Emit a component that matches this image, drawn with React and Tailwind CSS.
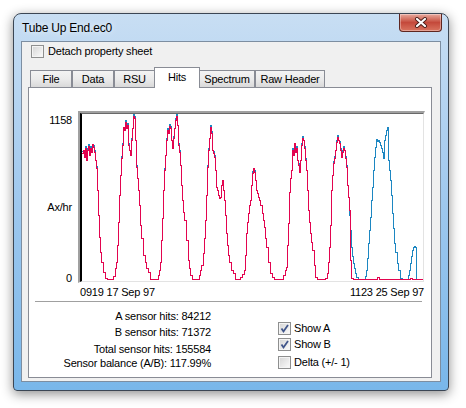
import React from 'react';

// red trace (B sensor) in page pixels
const red = [
  [81,153],[83,150],[84,157],[85,148],[86,160],[87,150],[88,146],[89,155],[90,148],[91,152],[92,144],[93,147],[94,152],[95,160],[96,168],[97,190],[98,215],[99,237],[100,252],[101,262],[103,272],[105,278],[107,281],[109,280],[111,279],[113,276],[115,268],[116,262],[117,245],[118,222],[119,195],[120,175],[121,158],[122,145],[123,127],[124,130],[125,122],[126,128],[127,125],[128,145],[129,150],[130,155],[131,140],[132,128],[133,116],[134,118],[135,140],[136,167],[137,178],[138,190],[139,205],[140,225],[141,238],[143,255],[145,262],[146,268],[148,272],[150,281],[153,281],[156,279],[158,275],[159,270],[160,262],[161,240],[162,218],[163,190],[164,170],[165,155],[166,140],[167,130],[168,133],[169,126],[170,128],[171,140],[172,148],[173,138],[174,128],[175,120],[176,116],[177,125],[178,145],[179,152],[180,165],[181,185],[182,200],[183,212],[184,220],[186,240],[188,260],[189,268],[190,275],[192,280],[195,281],[197,279],[199,275],[200,270],[201,265],[203,253],[204,238],[205,220],[206,195],[207,167],[208,150],[209,138],[210,127],[211,133],[212,150],[213,153],[214,157],[215,170],[216,187],[217,190],[218,195],[219,198],[220,197],[221,185],[222,180],[223,190],[224,200],[225,215],[226,233],[227,245],[228,255],[229,262],[231,270],[233,273],[235,279],[237,281],[240,277],[242,274],[244,270],[245,255],[246,233],[247,222],[248,213],[249,205],[250,200],[251,185],[252,173],[253,168],[254,172],[255,180],[256,190],[257,193],[258,197],[259,200],[260,205],[262,213],[263,220],[264,227],[265,238],[266,247],[268,262],[270,273],[272,277],[274,280],[277,281],[279,281],[281,279],[283,275],[285,270],[286,267],[287,245],[288,223],[289,192],[290,178],[291,170],[292,150],[293,155],[294,143],[295,152],[296,148],[297,160],[298,165],[299,172],[300,160],[301,145],[302,138],[303,140],[304,148],[305,160],[306,170],[307,190],[308,210],[309,222],[310,233],[311,242],[312,250],[314,265],[315,277],[317,281],[320,281],[323,280],[325,278],[327,273],[328,262],[329,247],[330,225],[331,190],[332,175],[333,163],[334,158],[335,150],[336,142],[337,137],[338,140],[339,143],[340,150],[341,157],[342,152],[343,148],[344,150],[345,158],[346,167],[347,185],[348,197],[349,210],[350,260],[351,278],[353,281],[358,281],[362,281],[364,280],[366,279],[368,281],[372,281],[375,279],[377,277],[379,279],[381,281],[386,281],[390,280],[393,281],[398,281],[400,281],[405,281],[408,280],[410,278],[412,279],[414,281],[423,281],
];

// blue trace (A sensor): tracks red, then keeps going after B dies
const blue = [
  ...red.filter(([x]) => x < 349).map(([x, y], i) => [x, y < 175 && i % 3 !== 1 ? y - 2 : y]),
  [349,215],[350,230],[351,247],[352,256],[353,263],[354,268],[355,273],[356,277],[358,281],[361,281],[363,280],[365,276],[366,270],[367,258],[368,243],[369,230],[370,217],[371,200],[372,187],[373,170],[374,157],[375,147],[376,139],[377,141],[378,140],[379,142],[380,145],[381,148],[382,152],[383,158],[384,140],[385,135],[386,130],[387,127],[388,160],[389,170],[390,180],[391,195],[392,213],[393,228],[394,243],[395,252],[397,263],[398,270],[400,278],[402,281],[406,281],[408,275],[409,270],[410,263],[411,256],[412,250],[413,247],[414,246],[415,247],[416,281],[423,281],
];

// staircase path so the trace looks like the old GDI plot
const stepPath = (arr) =>
  arr
    .map(([x, y], i) => {
      const yy = Math.min(y, 279) + 0.5;
      return i === 0 ? `M${x + 0.5} ${yy}` : `H${x + 0.5} V${yy}`;
    })
    .join(' ');

const CheckBox = ({ checked }) => (
  <div className="w-[13px] h-[13px] border border-[#8e8f8f] bg-[#f4f4f4] p-px shrink-0">
    <div className="w-full h-full bg-gradient-to-br from-[#d8d8d8] to-[#f8f8f8] relative">
      {checked && (
        <svg width="11" height="11" viewBox="0 0 11 11" className="absolute -top-px -left-px">
          <path d="M2.5 5.5 L4.5 8.5 L9 2" fill="none" stroke="#40558a" strokeWidth="1.8" />
        </svg>
      )}
    </div>
  </div>
);

const Tab = ({ label, w, selected, className = '' }) =>
  selected ? (
    <div className={`${w} h-[21px] bg-white border border-b-0 border-[#898c95] relative z-10 flex justify-center pt-[3px] ${className}`}>
      {label}
    </div>
  ) : (
    <div className={`${w} h-[17px] mb-px bg-gradient-to-b from-[#f3f3f3] via-[#ebebeb] to-[#d9d9d9] border border-b-0 border-[#898c95] flex justify-center pt-[2px] ${className}`}>
      {label}
    </div>
  );

export default function App() {
  return (
    <div className="w-[466px] h-[408px] bg-white pt-[13px] pl-[13px] text-black font-['Liberation_Sans',Arial,sans-serif] text-[11px] leading-[13px] tracking-[-0.2px]">
      <div className="w-[436px] h-[378px] rounded-t-[8px] rounded-b-[4px] border border-[#3b4654] bg-gradient-to-b from-[#c8def3] via-[#9fc8ee] to-[#79b7ea] shadow-[0_3px_12px_rgba(0,0,0,0.45)] flex flex-col px-[7px] pb-[8px]">
        {/* title bar */}
        <div className="h-[27px] -mx-[7px] flex items-start justify-between">
          <div className="pl-[8px] pt-[7px] text-[12px] leading-[14px] [text-shadow:0_0_6px_#fff]">Tube Up End.ec0</div>
          <div className="w-[43px] h-[18px] mr-[6px] rounded-b-[4px] border border-t-0 border-[#5e2620] bg-gradient-to-b from-[#e7a99e] via-[#c4493b] to-[#d9735f] flex items-center justify-center shadow-[inset_0_0_0_1px_rgba(255,255,255,0.35)]">
            <svg width="14" height="11" viewBox="0 0 14 11">
              <path d="M3 2 L11 9 M11 2 L3 9" stroke="#4a1d18" strokeWidth="4" strokeLinecap="round" />
              <path d="M3 2 L11 9 M11 2 L3 9" stroke="#fff" strokeWidth="2.2" strokeLinecap="round" />
            </svg>
          </div>
        </div>

        {/* client area */}
        <div className="flex-1 border border-[#7d8ea1] bg-[#f0f0f0] flex flex-col">
          <div className="pt-[3px] pl-[9px] flex items-center gap-[4px]">
            <CheckBox />
            <span>Detach property sheet</span>
          </div>

          <div className="mt-[9px] ml-[8px] h-[21px] -mb-px flex items-end">
            <Tab label="File" w="w-[42px]" />
            <Tab label="Data" w="w-[42px]" />
            <Tab label="RSU" w="w-[41px]" />
            <Tab label="Hits" w="w-[46px]" selected className="-ml-px" />
            <Tab label="Spectrum" w="w-[56px]" className="-ml-px" />
            <Tab label="Raw Header" w="w-[70px]" />
          </div>

          <div className="ml-[6px] w-[404px] h-[291px] border border-[#898c95] bg-white flex flex-col">
            {/* chart */}
            <div className="pt-[23px] flex">
              <div className="w-[43px] h-[172px] flex flex-col items-end">
                <span className="mt-[3px]">1158</span>
                <span className="mt-[74px]">Ax/hr</span>
                <span className="mt-[58px]">0</span>
              </div>
              <div className="ml-[6px] w-[347px] h-[172px] border-t-2 border-l-2 border-[#a0a0a0] border-r border-b border-r-white border-b-white">
                <div className="w-full h-full border-t border-l-2 border-t-[#696969] border-l-black border-r border-b border-r-[#e3e3e3] border-b-[#e3e3e3] overflow-hidden">
                  <svg width="341" height="167" viewBox="82 114 341 167" className="block" shapeRendering="crispEdges">
                    <path d={stepPath(blue)} fill="none" stroke="#1d87c2" strokeWidth="1" />
                    <path d={stepPath(red)} fill="none" stroke="#e3044f" strokeWidth="1" />
                  </svg>
                </div>
              </div>
            </div>
            <div className="ml-[49px] w-[347px] mt-[3px] pl-[2px] pr-[1px] flex justify-between">
              <span>0919 17 Sep 97</span>
              <span>1123 25 Sep 97</span>
            </div>
            <div className="mt-[2px] ml-[6px] w-[387px] h-px bg-[#a0a0a0]" />

            {/* stats */}
            <div className="flex">
              <div className="w-[182px] flex flex-col items-end">
                <span className="mt-[8px]">A sensor hits: 84212</span>
                <span className="mt-[3px]">B sensor hits: 71372</span>
                <span className="mt-[4px]">Total sensor hits: 155584</span>
                <span className="mt-px">Sensor balance (A/B): 117.99%</span>
              </div>
              <div className="ml-[67px] pt-[20px] flex flex-col">
                <div className="flex items-center gap-[3px]">
                  <CheckBox checked />
                  <span>Show A</span>
                </div>
                <div className="mt-[3px] flex items-center gap-[3px]">
                  <CheckBox checked />
                  <span>Show B</span>
                </div>
                <div className="mt-[5px] flex items-center gap-[3px]">
                  <CheckBox />
                  <span>Delta (+/- 1)</span>
                </div>
              </div>
            </div>
          </div>
        </div>
      </div>
    </div>
  );
}
